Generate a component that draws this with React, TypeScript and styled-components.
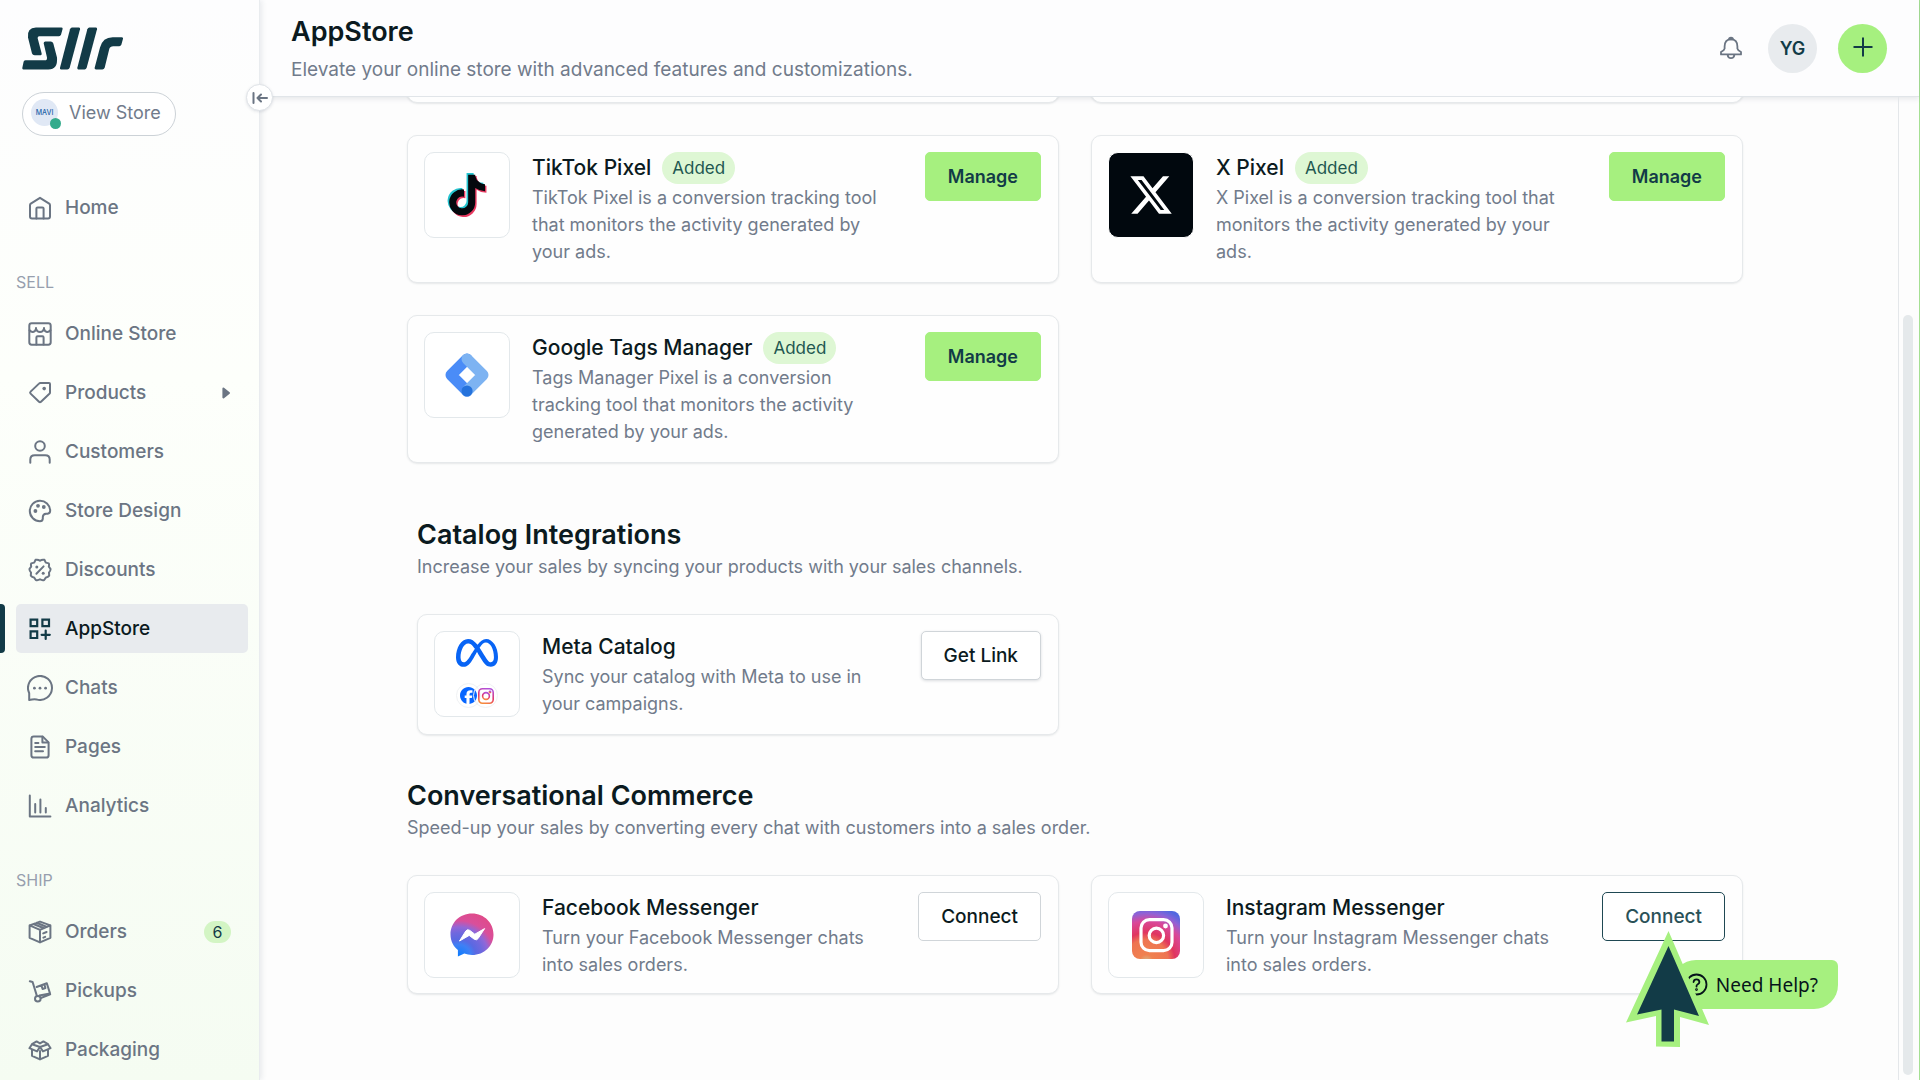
import React from 'react';
import styled, { createGlobalStyle, css } from 'styled-components';
import { FaTiktok, FaXTwitter, FaMeta, FaFacebook } from 'react-icons/fa6';

const color = {
  ink: '#0b1a20',
  navy: '#123b47',
  muted: '#717b8b',
  nav: '#6b7583',
  label: '#979fae',
  line: '#e6e9eb',
  green: '#a6f07f',
  mint: '#def7d4',
};

const GlobalStyle = createGlobalStyle`
  *, *::before, *::after { box-sizing: border-box; }
  body {
    margin: 0;
    overflow: hidden;
    font-family: Inter, Roboto, sans-serif;
    font-size: 18px;
    line-height: 27px;
    color: ${color.ink};
    background: #fdfdfd;
  }
  h1, h2, h3, p, ul { margin: 0; padding: 0; }
  ul { list-style: none; }
  a { color: inherit; text-decoration: none; }
  button { font-family: inherit; cursor: pointer; }
  svg { display: block; flex: none; }
`;

/* ---------- shell ---------- */

const Shell = styled.div`
  display: flex;
  height: 100vh;
  border-right: 1px solid #a5e093;
`;

const Sidebar = styled.aside`
  position: relative;
  z-index: 2;
  flex: none;
  width: 260px;
  background: linear-gradient(#fdfdfe 0%, #fdfffb 35%, #f5fcf2 100%);
  border-right: 1px solid #e9ecef;
  box-shadow: 2px 0 5px rgba(60, 75, 100, 0.1);
`;

const SidebarBody = styled.div`
  display: flex;
  flex-direction: column;
  height: 100%;
  padding: 27px 11px 0 16px;
  overflow: hidden;
`;

const LogoLink = styled.a`
  margin-left: 6px;
  align-self: flex-start;
`;

const StoreLink = styled.a`
  display: flex;
  align-items: center;
  align-self: flex-start;
  gap: 11px;
  flex: none;
  height: 44px;
  margin: 22px 0 47px 6px;
  padding: 0 14px 3px 8px;
  border: 1px solid #ccd2d7;
  border-radius: 22px;
  background: #fff;
  color: ${color.muted};
`;

const StoreAvatar = styled.span`
  position: relative;
  display: grid;
  place-items: center;
  width: 27px;
  height: 27px;
  border-radius: 50%;
  background: #e0e8f5;
  color: #1d62a8;
  font-size: 7px;
  font-weight: 500;
  line-height: 8px;

  &::after {
    content: '';
    position: absolute;
    right: -3px;
    bottom: -3px;
    width: 11px;
    height: 11px;
    border-radius: 50%;
    background: #33ab8c;
  }
`;

const NavList = styled.ul`
  display: flex;
  flex: none;
  flex-direction: column;
  gap: 10px;
`;

const NavLabel = styled.h2`
  flex: none;
  padding: 40px 0 17px;
  color: ${color.label};
  font-size: 16px;
  font-weight: 400;
  line-height: 20px;
`;

const NavLink = styled.a<{ $active?: boolean }>`
  position: relative;
  display: flex;
  align-items: center;
  gap: 12px;
  height: 49px;
  padding: 0 17px 0 11px;
  border-radius: 5px;
  color: ${color.nav};
  font-size: 19px;
  font-weight: 500;

  ${p =>
    p.$active &&
    css`
      background: #e8ebee;
      color: ${color.ink};

      svg { color: ${color.navy}; }

      &::before {
        content: '';
        position: absolute;
        left: -16px;
        width: 5px;
        height: 49px;
        border-radius: 0 4px 4px 0;
        background: ${color.navy};
      }
    `}
`;

const NavText = styled.span`
  flex: 1;
`;

const Count = styled.span`
  min-width: 27px;
  border-radius: 11px;
  background: #d3f5c4;
  color: ${color.navy};
  font-size: 16px;
  font-weight: 400;
  line-height: 22px;
  text-align: center;
`;

const Collapse = styled.button`
  position: absolute;
  top: 84px;
  right: -14px;
  display: grid;
  place-items: center;
  width: 27px;
  height: 27px;
  padding: 0;
  border: 1px solid #dfe3e7;
  border-radius: 50%;
  background: #fff;
  color: ${color.nav};
  box-shadow: 0 1px 3px rgba(60, 75, 100, 0.15);
`;

const Main = styled.main`
  display: flex;
  flex: 1;
  flex-direction: column;
  min-width: 0;
`;

const Header = styled.header`
  display: flex;
  flex: none;
  align-items: center;
  justify-content: space-between;
  height: 97px;
  padding: 0 32px 0 31px;
  background: #fdfdfe;
  border-bottom: 1px solid #e1e5e9;
  box-shadow: 0 2px 5px rgba(60, 75, 100, 0.12);
`;

const TitleBlock = styled.div`
  display: flex;
  flex-direction: column;
  gap: 8px;
  padding-top: 2px;
`;

const PageTitle = styled.h1`
  font-size: 27px;
  font-weight: 600;
  line-height: 32px;
`;

const Lead = styled.p<{ $large?: boolean }>`
  color: ${color.muted};
  font-size: ${p => (p.$large ? 19 : 18)}px;
`;

const Actions = styled.div`
  display: flex;
  align-items: center;
  gap: 21px;
`;

const RoundButton = styled.button<{ $bg: string }>`
  display: grid;
  place-items: center;
  width: 49px;
  height: 49px;
  padding: 0;
  border: 0;
  border-radius: 50%;
  background: ${p => p.$bg};
  color: ${color.navy};
  font-size: 18px;
  font-weight: 600;
`;

const BellButton = styled.button`
  padding: 4px;
  border: 0;
  background: none;
  color: ${color.nav};
`;

const Body = styled.div`
  display: flex;
  flex: 1;
  min-height: 0;
`;

const Content = styled.div`
  flex: 1;
  padding: 0 155px 0 147px;
  overflow: hidden;
`;

const Track = styled.div`
  display: flex;
  flex: none;
  width: 21px;
  padding: 218px 6px 5px 4px;
  border-left: 1px solid #e4e7ea;
`;

const Thumb = styled.div`
  flex: 1;
  border-radius: 5px;
  background: #e5e9eb;
`;

/* ---------- cards ---------- */

const CardGrid = styled.div<{ $gap?: number; $peek?: boolean }>`
  display: grid;
  grid-template-columns: 1fr 1fr;
  gap: 32px ${p => p.$gap ?? 32}px;
  margin: ${p => (p.$peek ? '-20px 0 32px' : '0')};
`;

const CardBox = styled.article<{ $short?: boolean }>`
  display: flex;
  align-items: flex-start;
  gap: 22px;
  min-height: 26px;
  padding: 16px 17px ${p => (p.$short ? 15 : 17)}px 16px;
  border: 1px solid ${color.line};
  border-radius: 10px;
  background: #fefefe;
  box-shadow: 0 1px 2px rgba(30, 45, 60, 0.1);
`;

const PeekCard = styled(CardBox)`
  padding: 0;
`;

const LogoTile = styled.div<{ $wide?: boolean; $dark?: boolean }>`
  display: flex;
  flex: none;
  align-items: center;
  justify-content: center;
  width: ${p => (p.$wide ? 96 : 86)}px;
  height: 86px;
  border: 1px solid ${p => (p.$dark ? '#fefefe' : '#e3e8eb')};
  border-radius: 10px;
  background: ${p => (p.$dark ? '#01080e' : '#fff')};
  color: #fff;
`;

const CardText = styled.div`
  flex: 1;
  min-width: 0;
  padding-right: 12px;
`;

const CardHead = styled.div`
  display: flex;
  align-items: center;
  gap: 11px;
  height: 32px;
`;

const CardTitle = styled.h3`
  font-size: 21px;
  font-weight: 500;
  line-height: 32px;
  white-space: nowrap;
`;

const Badge = styled.span`
  padding: 0 10px;
  border-radius: 16px;
  background: ${color.mint};
  color: #1f5751;
  font-size: 17px;
  line-height: 32px;
`;

const CardDesc = styled.p`
  color: ${color.muted};
`;

const CardButton = styled.button<{ $kind: Kind }>`
  flex: none;
  height: 49px;
  padding: 0 22px;
  border: 1px solid ${p => (p.$kind === 'solid' ? color.green : p.$kind === 'focus' ? '#1f4853' : '#d0d5d9')};
  border-radius: 5px;
  background: ${p => (p.$kind === 'solid' ? color.green : '#fff')};
  color: ${p => (p.$kind === 'solid' ? color.navy : p.$kind === 'focus' ? '#2a5158' : color.ink)};
  box-shadow: ${p => (p.$kind === 'raised' ? '0 1px 3px rgba(30, 45, 60, 0.16)' : 'none')};
  font-size: ${p => (p.$kind === 'solid' ? 18 : 19)}px;
  font-weight: ${p => (p.$kind === 'solid' ? 600 : 500)};
`;

const Section = styled.section<{ $inset?: boolean }>`
  margin-top: ${p => (p.$inset ? 56 : 45)}px;
  padding-left: ${p => (p.$inset ? 10 : 0)}px;
`;

const SectionTitle = styled.h2`
  margin-bottom: 2px;
  font-size: 27px;
  font-weight: 600;
  line-height: 32px;
`;

const SectionLead = styled(Lead)`
  margin-bottom: 34px;
`;

const MetaStack = styled.div`
  display: flex;
  flex-direction: column;
  align-items: center;
  gap: 9px;
  padding-bottom: 8px;
`;

const Pair = styled.div`
  display: flex;
`;

const Chip = styled.span`
  display: grid;
  place-items: center;
  width: 25px;
  height: 25px;
  margin: 0 -4px;
  border: 1px solid #f0f2f4;
  border-radius: 50%;
`;

/* ---------- floating parts ---------- */

const HelpButton = styled.button`
  position: fixed;
  right: 82px;
  bottom: 71px;
  z-index: 3;
  display: flex;
  align-items: center;
  gap: 8px;
  height: 49px;
  padding: 0 20px 0 13px;
  border: 0;
  border-radius: 24px 6px 24px 6px;
  background: ${color.green};
  color: #06141a;
  font-family: 'Noto Sans', sans-serif;
  font-size: 19px;
`;

const Pointer = styled.svg`
  position: fixed;
  right: 210px;
  bottom: 32px;
  z-index: 4;
  pointer-events: none;
`;

/* ---------- icons ---------- */

const NavSvg = styled.svg.attrs({ width: 26, height: 26, viewBox: '-1 -1 26 26', 'aria-hidden': true })`
  fill: none;
  stroke: currentColor;
  stroke-width: 2;
  stroke-linecap: round;
  stroke-linejoin: round;
`;

const Dot = ({ x, y, r = 1.5 }: { x: number; y: number; r?: number }) => (
  <circle cx={x} cy={y} r={r} fill="currentColor" stroke="none" />
);

const icons = {
  home: (
    <>
      <path d="M12 1.8 2.8 7.6Q2 8.2 2 9.2V20.6a2 2 0 0 0 2 2H20a2 2 0 0 0 2-2V9.2Q22 8.2 21.2 7.6Z" />
      <path d="M8.4 22.4V12.6Q8.4 11.4 9.6 11.4H14.4Q15.6 11.4 15.6 12.6V22.4" />
    </>
  ),
  store: (
    <>
      <rect x="1.3" y="1.3" width="21.4" height="21.4" rx="2.4" />
      <path d="M1.5 8.2Q3 10.2 5 10Q7.4 9.6 8 6.8Q9 10 12 10Q15 10 16 6.8Q16.6 9.6 19 10Q21 10.2 22.5 8.2" />
      <path d="M8 6.8V6M16 6.8V6" />
      <path d="M8.4 22.5V15.4Q8.4 14.2 9.6 14.2H14.4Q15.6 14.2 15.6 15.4V22.5" />
    </>
  ),
  tag: (
    <>
      <path d="M12.4 2H21Q22 2 22 3V11.4Q22 12.2 21.4 12.8L13 20.8Q12 21.8 11 20.8L2.6 12.6Q1.6 11.6 2.6 10.6L11 2.6Q11.6 2 12.4 2Z" />
      <Dot x={16.2} y={7.6} r={1.8} />
    </>
  ),
  user: (
    <>
      <circle cx="12" cy="6" r="4.8" />
      <path d="M2.3 22.8V19.6Q2.3 15.2 6.8 15.2H17.2Q21.7 15.2 21.7 19.6V22.8" />
    </>
  ),
  palette: (
    <>
      <path d="M22.2 11.6A10.2 10.2 0 1 0 12 22.2Q14.6 22.2 14.8 19.6V18Q15 15 18 14.8H19.6Q22.2 14.4 22.2 11.6Z" />
      <Dot x={7.4} y={12} r={1.9} />
      <Dot x={10} y={6.8} r={1.9} />
      <Dot x={15.8} y={8} r={1.9} />
    </>
  ),
  percent: (
    <>
      <path d="M12 2.8Q13.8 1.2 16.4 1.8L17.8 4.6L20.8 5.4Q21.4 6.8 20.8 8.6L22.6 11Q22.4 13.4 21 14.6L21.2 17.6Q20 19.2 18 19.4L16.2 22Q14 22.6 12 21.2Q10 22.6 7.8 22L6 19.4Q4 19.2 2.8 17.6L3 14.6Q1.6 13.4 1.4 11L3.2 8.6Q2.6 6.8 3.2 5.4L6.2 4.6L7.6 1.8Q10.2 1.2 12 2.8Z" />
      <path d="M8.4 15.8 15.6 8.4" />
      <Dot x={8.8} y={9} />
      <Dot x={15.2} y={15.2} />
    </>
  ),
  apps: (
    <g strokeWidth="2.2">
      <path strokeLinejoin="miter" d="M2.6 2.6H9.2V9.2H2.6ZM14.4 2.6H21V9.2H14.4ZM2.6 14.4H9.2V21H2.6Z" />
      <path d="M17.7 13.6V22M13.6 17.8H21.8" />
    </g>
  ),
  chat: (
    <>
      <path d="M1.2 24V17.2A12 12 0 1 1 8.4 23.4Q5.4 23 1.2 24Z" />
      <Dot x={6.4} y={12.2} r={1.4} />
      <Dot x={12} y={12.2} r={1.4} />
      <Dot x={17.6} y={12.2} r={1.4} />
    </>
  ),
  page: (
    <>
      <path d="M14.6 1.4H5.8Q3.4 1.4 3.4 3.8V20.2Q3.4 22.6 5.8 22.6H18.2Q20.6 22.6 20.6 20.2V7.4Z" />
      <path d="M14.4 1.8V7.6H20.2M7.2 8H10.4M7.2 12H16.8M7.2 16.2H15" />
    </>
  ),
  chart: <path d="M1.8 1.6V22.4H22.4M7.2 18.4V10M12.4 18.4V5.6M17.8 18.4V14" />,
  box: (
    <>
      <path d="M12 1.6 22.4 5.4V17.8L12 22.4 1.6 17.8V5.4ZM1.6 5.4 12 9.8 22.4 5.4M12 9.8V22.4M5.4 4 16 8.2M8.6 2.8 19 7" />
      <path d="M15.2 13.4 18.6 12M15.4 17.6 17.2 16.8" />
    </>
  ),
  truck: (
    <>
      <path d="M1.8 2.2 4.6 3 8.8 16.6" />
      <circle cx="9.8" cy="19.8" r="2.8" />
      <path d="M12.8 19 22.2 15.4M8.6 8 18.8 4.2 22 14.4 11.4 16.6M13.4 6.4 14.6 10 17.4 9 16.4 5.4" />
    </>
  ),
  openBox: (
    <path d="M12 9 4 6.2 1.4 10.2 9 13.4 12 9 15 13.4 22.6 10.2 20 6.2ZM4 6.2 8.6 3.4 12 5.4 15.4 3.4 20 6.2M4 11.6V17.8L12 21.4 20 17.8V11.6M12 13V21.4" />
  ),
};

type IconName = keyof typeof icons;
const Icon = ({ name }: { name: IconName }) => <NavSvg>{icons[name]}</NavSvg>;

const SllrLogo = () => (
  <svg width="101" height="43" viewBox="66 81 303 128" role="img" aria-label="Sllr" fill={color.navy}>
    <path d="M184 82H108Q80 84 84 112L96 160Q98 165 104 165H122Q126 165 125 160L113 114Q112 108 118 108H177Q181 108 183 104L188 86Q188 82 184 82Z" />
    <path d="M136 124H152Q158 124 160 130L171 172Q174 208 145 208H70Q66 208 67 203L71 184Q73 180 77 180H138Q142 178 141 172L131 129Q131 124 136 124Z" />
    <path d="M216 82H237Q241 82 240 87L209 203Q207 208 202 208H183Q179 208 180 203L210 87Q212 82 216 82Z" />
    <path d="M268 82H288Q292 82 291 87L260 203Q258 208 254 208H235Q231 208 232 203L262 87Q264 82 268 82Z" />
    <path d="M365 111Q370 111 369 116L364 134Q362 138 358 138H340Q330 138 328 146L314 203Q312 208 307 208H288Q283 208 284 203L300 142Q308 111 338 111Z" />
  </svg>
);

const Tiktok = () => (
  <svg width="46" height="46" viewBox="0 0 46 46" aria-hidden>
    <FaTiktok x={1} y={1} size={41} color="#25c4d0" />
    <FaTiktok x={4} y={4} size={41} color="#e83a61" />
    <FaTiktok x={2.6} y={2.4} size={41} color="#04090e" />
  </svg>
);

const TagManager = () => (
  <svg width="44" height="44" viewBox="0 0 44 44" aria-hidden fill="none" strokeWidth="11" strokeLinecap="round" strokeLinejoin="round">
    <path d="M22 6 6 22 22 38" stroke="#4a8cf7" />
    <path d="M22 6 38 22 22 38" stroke="#7db3f2" />
    <circle cx="22" cy="38" r="5.6" fill="#2572dc" />
  </svg>
);

const InstaSmall = () => (
  <svg width="16" height="16" viewBox="0 0 16 16" aria-hidden>
    <defs>
      <linearGradient id="instaSmall" x1="0.6" y1="0" x2="0.3" y2="1">
        <stop offset="0" stopColor="#b14fd8" />
        <stop offset="0.55" stopColor="#e5386b" />
        <stop offset="1" stopColor="#f58a3c" />
      </linearGradient>
    </defs>
    <g fill="none" stroke="url(#instaSmall)" strokeWidth="1.6">
      <rect x="0.8" y="0.8" width="14.4" height="14.4" rx="3.6" />
      <circle cx="8" cy="8" r="3.4" />
      <circle cx="12" cy="4" r="0.6" />
    </g>
  </svg>
);

const Messenger = () => (
  <svg width="44" height="44" viewBox="0 0 44 44" aria-hidden>
    <defs>
      <radialGradient id="messenger" cx="0.2" cy="1" r="1.1">
        <stop offset="0" stopColor="#0a7cff" />
        <stop offset="0.25" stopColor="#3f80f5" />
        <stop offset="0.36" stopColor="#5a69e2" />
        <stop offset="0.5" stopColor="#6f68de" />
        <stop offset="0.62" stopColor="#9067d8" />
        <stop offset="0.76" stopColor="#d94f9b" />
        <stop offset="1" stopColor="#e04a88" />
      </radialGradient>
    </defs>
    <path fill="url(#messenger)" d="M22 0.5C9.6 0.5 0.5 9.8 0.5 21.4c0 6.4 2.8 11.8 7.4 15.6V43.4l6.4-2.8c2.4.8 5 1.3 7.7 1.3 12.4 0 21.5-9.2 21.5-20.5S34.4.5 22 .5Z" />
    <path fill="#fff" stroke="#fff" strokeWidth="1" strokeLinejoin="round" d="M9.5 28 15.8 18Q17.4 15.8 19.8 17.4L24.8 21.2 34.6 15.6 28.2 25.4Q26.6 27.8 24.2 26.2L19.2 22.4Z" />
  </svg>
);

const InstagramTile = () => (
  <svg width="48" height="48" viewBox="0 0 48 48" aria-hidden>
    <defs>
      <radialGradient id="instagram" cx="0.3" cy="1.05" r="1.2">
        <stop offset="0" stopColor="#d3b98a" />
        <stop offset="0.12" stopColor="#f0814f" />
        <stop offset="0.38" stopColor="#ee7452" />
        <stop offset="0.5" stopColor="#e0355f" />
        <stop offset="0.7" stopColor="#d9489a" />
        <stop offset="0.84" stopColor="#8f62d6" />
        <stop offset="0.96" stopColor="#5168e0" />
      </radialGradient>
    </defs>
    <rect width="48" height="48" rx="8" fill="url(#instagram)" />
    <g fill="none" stroke="#fff" strokeWidth="3.2">
      <rect x="9" y="8.6" width="31" height="31" rx="8.4" />
      <circle cx="24.4" cy="24.4" r="7.2" />
      <circle cx="33.5" cy="15" r="2.4" fill="#fff" stroke="none" />
    </g>
  </svg>
);

/* ---------- data ---------- */

type Kind = 'solid' | 'raised' | 'plain' | 'focus';
type NavItem = { icon: IconName; text: string; active?: boolean; count?: number; more?: boolean };

const sell: NavItem[] = [
  { icon: 'store', text: 'Online Store' },
  { icon: 'tag', text: 'Products', more: true },
  { icon: 'user', text: 'Customers' },
  { icon: 'palette', text: 'Store Design' },
  { icon: 'percent', text: 'Discounts' },
  { icon: 'apps', text: 'AppStore', active: true },
  { icon: 'chat', text: 'Chats' },
  { icon: 'page', text: 'Pages' },
  { icon: 'chart', text: 'Analytics' },
];

const ship: NavItem[] = [
  { icon: 'box', text: 'Orders', count: 6 },
  { icon: 'truck', text: 'Pickups' },
  { icon: 'openBox', text: 'Packaging' },
];

const Nav = ({ items }: { items: NavItem[] }) => (
  <NavList>
    {items.map(i => (
      <li key={i.text}>
        <NavLink href="#" $active={i.active} aria-current={i.active ? 'page' : undefined}>
          <Icon name={i.icon} />
          <NavText>{i.text}</NavText>
          {i.count && <Count>{i.count}</Count>}
          {i.more && (
            <svg width="10" height="12" viewBox="0 0 10 12" aria-hidden>
              <path d="M2.4 1.6 8 6 2.4 10.4Z" fill="currentColor" stroke="currentColor" strokeWidth="2" strokeLinejoin="round" />
            </svg>
          )}
        </NavLink>
      </li>
    ))}
  </NavList>
);

type CardProps = {
  title: string;
  desc: string;
  action: string;
  kind: Kind;
  logo: React.ReactNode;
  added?: boolean;
  wide?: boolean;
  dark?: boolean;
};

const Card = ({ title, desc, action, kind, logo, added, wide, dark }: CardProps) => (
  <CardBox $short={wide}>
    <LogoTile $wide={wide} $dark={dark}>{logo}</LogoTile>
    <CardText>
      <CardHead>
        <CardTitle>{title}</CardTitle>
        {added && <Badge>Added</Badge>}
      </CardHead>
      <CardDesc>{desc}</CardDesc>
    </CardText>
    <CardButton $kind={kind}>{action}</CardButton>
  </CardBox>
);

export default function App() {
  return (
    <>
      <GlobalStyle />
      <Shell>
        <Sidebar>
          <SidebarBody>
            <LogoLink href="#"><SllrLogo /></LogoLink>
            <StoreLink href="#">
              <StoreAvatar>MAVI</StoreAvatar>
              View Store
            </StoreLink>
            <Nav items={[{ icon: 'home', text: 'Home' }]} />
            <NavLabel>SELL</NavLabel>
            <Nav items={sell} />
            <NavLabel>SHIP</NavLabel>
            <Nav items={ship} />
          </SidebarBody>
          <Collapse aria-label="Collapse sidebar">
            <svg width="16" height="12" viewBox="0 0 16 12" fill="none" stroke="currentColor" strokeWidth="2" strokeLinecap="round" strokeLinejoin="round" aria-hidden>
              <path d="M1.5 1V11M15 6H5.5M9 2.5 5.5 6 9 9.5" />
            </svg>
          </Collapse>
        </Sidebar>

        <Main>
          <Header>
            <TitleBlock>
              <PageTitle>AppStore</PageTitle>
              <Lead $large>Elevate your online store with advanced features and customizations.</Lead>
            </TitleBlock>
            <Actions>
              <BellButton aria-label="Notifications">
                <svg width="24" height="24" viewBox="0 0 24 24" fill="none" stroke="currentColor" strokeWidth="1.8" strokeLinejoin="round" aria-hidden>
                  <path d="M12 3.2Q5.6 3.8 5.6 10.4V12.6Q5.4 14 2 16V18.4H22V16Q18.6 14 18.4 12.6V10.4Q18.4 3.8 12 3.2Z" />
                  <path d="M10 3.4Q10 1.6 12 1.6T14 3.4Z" fill="currentColor" />
                  <path d="M8.6 18.6Q9 22.2 12 22.2T15.4 18.6" />
                </svg>
              </BellButton>
              <RoundButton $bg="#e8ebee">YG</RoundButton>
              <RoundButton $bg={color.green} aria-label="Add">
                <svg width="22" height="22" viewBox="0 0 22 22" fill="none" stroke="currentColor" strokeWidth="2" aria-hidden>
                  <path d="M11 0.5V19.5M1.5 10H20.5" />
                </svg>
              </RoundButton>
            </Actions>
          </Header>

          <Body>
            <Content>
              <CardGrid $peek>
                <PeekCard />
                <PeekCard />
              </CardGrid>
              <CardGrid>
                <Card added title="TikTok Pixel" action="Manage" kind="solid" logo={<Tiktok />}
                  desc="TikTok Pixel is a conversion tracking tool that monitors the activity generated by your ads." />
                <Card added dark title="X Pixel" action="Manage" kind="solid" logo={<FaXTwitter size={46} />}
                  desc="X Pixel is a conversion tracking tool that monitors the activity generated by your ads." />
                <Card added title="Google Tags Manager" action="Manage" kind="solid" logo={<TagManager />}
                  desc="Tags Manager Pixel is a conversion tracking tool that monitors the activity generated by your ads." />
              </CardGrid>

              <Section $inset>
                <SectionTitle>Catalog Integrations</SectionTitle>
                <SectionLead>Increase your sales by syncing your products with your sales channels.</SectionLead>
                <CardGrid $gap={42}>
                  <Card title="Meta Catalog" action="Get Link" kind="raised"
                    desc="Sync your catalog with Meta to use in your campaigns."
                    logo={
                      <MetaStack>
                        <FaMeta size={42} color="#0864f5" />
                        <Pair>
                          <Chip><FaFacebook size={17} color="#0866ff" /></Chip>
                          <Chip><InstaSmall /></Chip>
                        </Pair>
                      </MetaStack>
                    } />
                </CardGrid>
              </Section>

              <Section>
                <SectionTitle>Conversational Commerce</SectionTitle>
                <SectionLead>Speed-up your sales by converting every chat with customers into a sales order.</SectionLead>
                <CardGrid>
                  <Card wide title="Facebook Messenger" action="Connect" kind="plain" logo={<Messenger />}
                    desc="Turn your Facebook Messenger chats into sales orders." />
                  <Card wide title="Instagram Messenger" action="Connect" kind="focus" logo={<InstagramTile />}
                    desc="Turn your Instagram Messenger chats into sales orders." />
                </CardGrid>
              </Section>
            </Content>
            <Track><Thumb /></Track>
          </Body>
        </Main>
      </Shell>

      <HelpButton>
        <svg width="23" height="23" viewBox="0 0 23 23" fill="none" stroke="currentColor" strokeWidth="1.8" strokeLinecap="round" aria-hidden>
          <circle cx="11.5" cy="11.5" r="10" />
          <path d="M8.6 9Q8.8 6.4 11.5 6.4T14.4 9Q14.4 10.4 12.8 11.3T11.5 13.6" />
          <circle cx="11.5" cy="16.6" r="0.5" />
        </svg>
        Need Help?
      </HelpButton>

      <Pointer width="84" height="117" viewBox="0 0 84 117" aria-hidden>
        <path fill={color.green} d="M42.5 0 83 94 54 86V116L30 115.5V85L0 91.5Z" />
        <path fill={color.navy} d="M42.5 15 73 85 48 78.5V110.5H35.5V78.5L11 83.5Z" />
      </Pointer>
    </>
  );
}
